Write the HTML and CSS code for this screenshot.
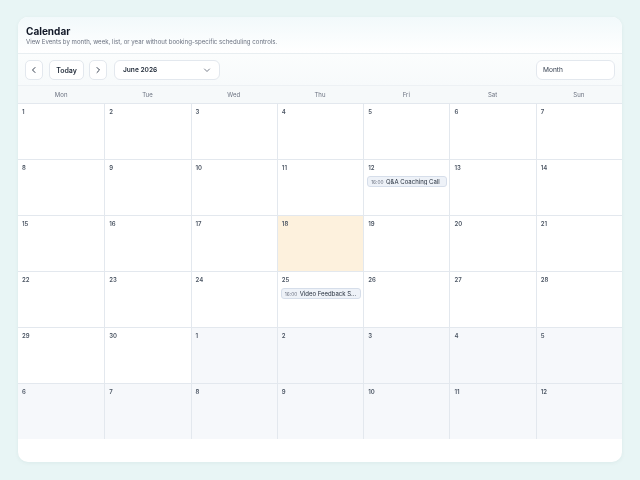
FILE: index.html
```html
<!DOCTYPE html>
<html lang="en">
<head>
    <meta charset="UTF-8">
    <meta name="viewport" content="width=device-width, initial-scale=1.0">
    <title>Calendar</title>
    <link rel="stylesheet" href="styles.css">
</head>
<body>
    <div class="card">
        <div class="card-header">
            <h1>Calendar</h1>
            <p>View Events by month, week, list, or year without booking-specific scheduling controls.</p>
        </div>
        <div class="toolbar">
            <div class="nav">
                <button class="btn btn-icon" aria-label="Previous">
                    <svg width="8" height="8" viewBox="0 0 8 8"><path d="M5 1.5 2.5 4 5 6.5" fill="none" stroke="#374151" stroke-width="1" stroke-linecap="round" stroke-linejoin="round"/></svg>
                </button>
                <button class="btn btn-today">Today</button>
                <button class="btn btn-icon" aria-label="Next">
                    <svg width="8" height="8" viewBox="0 0 8 8"><path d="M3 1.5 5.5 4 3 6.5" fill="none" stroke="#374151" stroke-width="1" stroke-linecap="round" stroke-linejoin="round"/></svg>
                </button>
                <div class="select select-month">
                    <span>June 2026</span>
                    <svg width="8" height="8" viewBox="0 0 8 8"><path d="M1.5 3 4 5.5 6.5 3" fill="none" stroke="#6b7280" stroke-width="0.9" stroke-linecap="round" stroke-linejoin="round"/></svg>
                </div>
            </div>
            <div class="select select-view"><span class="view-label">Month</span></div>
        </div>
        <div class="weekdays">
            <div>Mon</div><div>Tue</div><div>Wed</div><div>Thu</div><div>Fri</div><div>Sat</div><div>Sun</div>
        </div>
        <div class="grid" id="grid"></div>
    </div>

    <script>
        // June 2026 starts on a Monday, so the grid runs 1..30 then July 1..12
        const events = {
            12: { time: '16:00', title: 'Q&A Coaching Call' },
            25: { time: '16:00', title: 'Video Feedback Session' }
        };
        const today = 18;
        const grid = document.getElementById('grid');

        for (let i = 0; i < 42; i++) {
            const inMonth = i < 30;
            const day = inMonth ? i + 1 : i - 29;
            const cell = document.createElement('div');
            cell.className = 'day';
            if (!inMonth) cell.classList.add('outside');
            if (inMonth && day === today) cell.classList.add('today');

            const num = document.createElement('div');
            num.className = 'day-num';
            num.textContent = day;
            cell.appendChild(num);

            const ev = inMonth && events[day];
            if (ev) {
                const chip = document.createElement('div');
                chip.className = 'event';
                chip.title = ev.title;
                chip.innerHTML = `<span class="event-time">${ev.time}</span><span class="event-title">${ev.title}</span>`;
                cell.appendChild(chip);
            }
            grid.appendChild(cell);
        }
    </script>
</body>
</html>
```

FILE: styles.css
```css
body {
    margin: 0;
    padding: 17px 18px;
    background-color: #e8f5f5;
    font-family: Inter, "Noto Sans", sans-serif;
    color: #1f2937;
}
.card {
    background: white;
    border-radius: 10px;
    box-shadow: 0 1px 4px rgba(15, 60, 70, 0.06);
    padding-bottom: 23px;
    overflow: hidden;
    will-change: transform;
}
.card-header {
    padding: 8px 8px 6px;
    background: linear-gradient(180deg, #f2f9fb 0%, #ffffff 100%);
    border-bottom: 1px solid #e8eef1;
}
.card-header h1 {
    margin: 0;
    font-size: 10px;
    line-height: 12px;
    font-weight: 700;
    color: #111827;
}
.card-header p {
    margin: 0;
    font-size: 6.1px;
    line-height: 10px;
    color: #6b7280;
}
.toolbar {
    display: flex;
    align-items: center;
    justify-content: space-between;
    padding: 6px 7px 5px;
    background: linear-gradient(180deg, #fbfdfd 0%, #f7fafb 100%);
}
.nav {
    display: flex;
    align-items: center;
}
.btn {
    height: 20px;
    border: 1px solid #e3e8ee;
    border-radius: 5px;
    background: white;
    font-family: inherit;
    cursor: pointer;
    display: flex;
    align-items: center;
    justify-content: center;
    padding: 0;
}
.btn-icon {
    width: 18px;
}
.btn-today {
    width: 35px;
    margin: 0 5px 0 6px;
    font-size: 7px;
    font-weight: 600;
    color: #1f2937;
}
.select {
    height: 20px;
    box-sizing: border-box;
    border: 1px solid #e3e8ee;
    border-radius: 6px;
    background: white;
    display: flex;
    align-items: center;
    justify-content: space-between;
    padding: 0 8px;
    font-size: 6.6px;
}
.select-month {
    width: 106px;
    margin-left: 7px;
    font-weight: 600;
    color: #1f2937;
}
.select-view {
    width: 79px;
    padding-left: 6px;
    color: #374151;
}
.weekdays {
    display: grid;
    grid-template-columns: repeat(7, 1fr);
    height: 17px;
    align-items: center;
    background: #f6f9fa;
    border-top: 1px solid #edf1f4;
    font-size: 6px;
    color: #6b7280;
    text-align: center;
}
.grid {
    display: grid;
    grid-template-columns: repeat(7, 1fr);
    grid-auto-rows: 56px;
}
.day {
    border-top: 1px solid #e3e8ee;
    border-left: 1px solid #e3e8ee;
    padding: 4px 3px;
    min-width: 0;
}
.day:nth-child(7n + 1) {
    border-left: none;
}
.day.outside {
    background: #f6f8fb;
}
.day.today {
    background: #fdf1dd;
}
.day-num {
    font-size: 6px;
    line-height: 8px;
    font-weight: 600;
    color: #4b5563;
    padding-left: 1px;
}
.event {
    margin-top: 4px;
    height: 11px;
    box-sizing: border-box;
    background: #eef2f8;
    border: 1px solid #d6deea;
    border-radius: 3px;
    display: flex;
    align-items: center;
    padding: 0 3px;
    white-space: nowrap;
    overflow: hidden;
    width: 80px;
}
.event-time {
    font-size: 4.8px;
    color: #6b7280;
    margin-right: 2.5px;
}
.event-title {
    font-size: 6px;
    color: #1f2937;
    overflow: hidden;
    text-overflow: ellipsis;
}
```
